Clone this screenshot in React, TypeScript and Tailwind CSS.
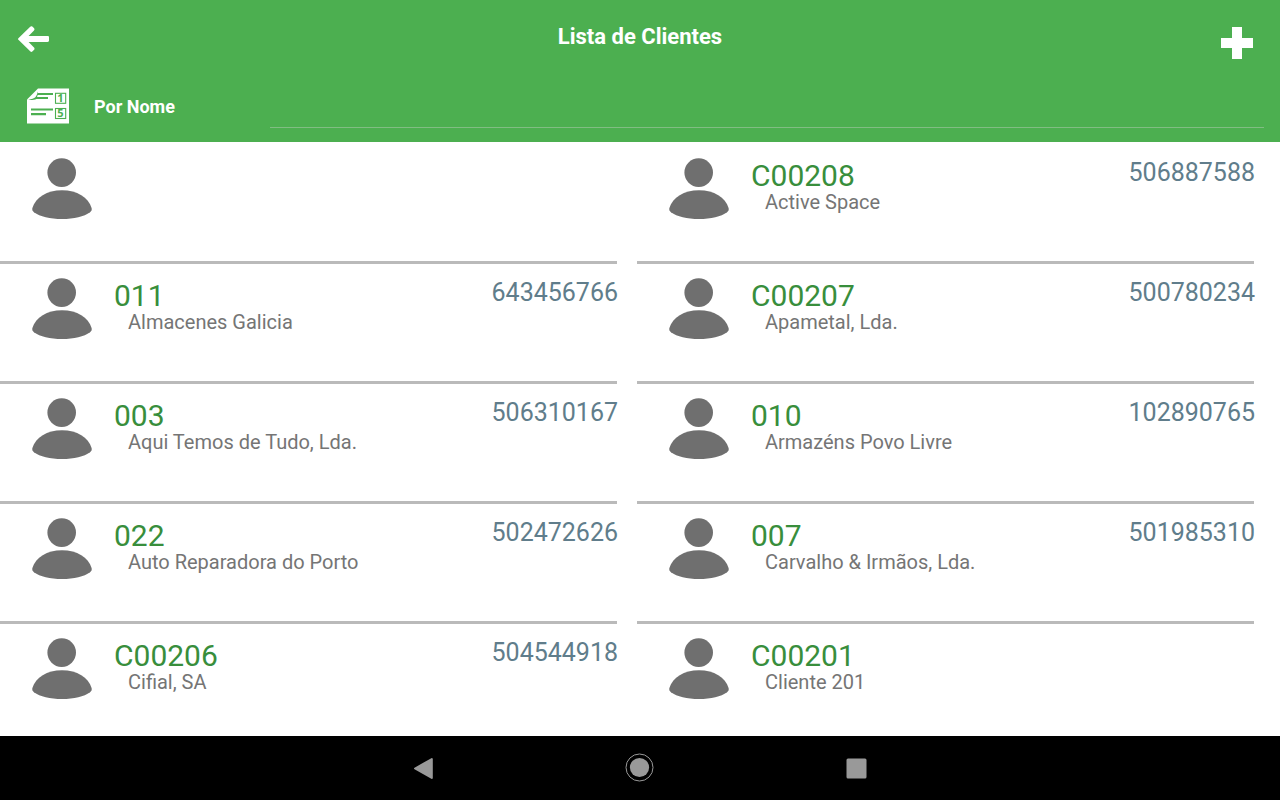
import React from "react";

type Client = { code: string; name: string; taxId: string };

const clients: Client[] = [
  { code: "", name: "", taxId: "" },
  { code: "C00208", name: "Active Space", taxId: "506887588" },
  { code: "011", name: "Almacenes Galicia", taxId: "643456766" },
  { code: "C00207", name: "Apametal, Lda.", taxId: "500780234" },
  { code: "003", name: "Aqui Temos de Tudo, Lda.", taxId: "506310167" },
  { code: "010", name: "Armazéns Povo Livre", taxId: "102890765" },
  { code: "022", name: "Auto Reparadora do Porto", taxId: "502472626" },
  { code: "007", name: "Carvalho & Irmãos, Lda.", taxId: "501985310" },
  { code: "C00206", name: "Cifial, SA", taxId: "504544918" },
  { code: "C00201", name: "Cliente 201", taxId: "" },
];

function BackIcon() {
  return (
    <svg width="32" height="26" viewBox="0 0 32 26" aria-hidden="true">
      <path
        d="M0.4 12.2 12.2 0.7c.7-.7 1.4-.7 2.1-.2l1.6 1.5c.8.8.8 1.7.1 2.5L10.600 10H29.500c1 0 1.500.500 1.500 1.400v3.200c0 .9-.5 1.400-1.500 1.400H10.600l5.400 5.500c.7.8.7 1.700-.1 2.500l-1.600 1.500c-.7.6-1.400.5-2.100-.2L.4 13.800c-.5-.5-.5-1.100 0-1.600Z"
        fill="#fff"
      />
    </svg>
  );
}

function PlusIcon() {
  return (
    <svg width="32" height="32" viewBox="0 0 32 32" aria-hidden="true">
      <path d="M11 0h10v11h11v10H21v11H11V21H0V11h11Z" fill="#fff" />
    </svg>
  );
}

function SortIcon() {
  return (
    <svg width="42" height="38" viewBox="0 0 42 38" aria-hidden="true">
      <path d="M11 .5H42V35.500H0V11.500Z" fill="#fff" />
      <g fill="#4caf50">
        <path d="M11 3.500V5H26V7H10.700L10 9H21V11H9.500C7.500 12 4 12.200 1.200 11.900 4.500 11.300 7.300 10.600 8.300 9.300 9.800 7.500 10.200 5.500 11 3.500Z" />
        <path d="M4 20.500H26V22.500H4ZM4 25H19V27.200H4Z" />
      </g>
      <g fill="none" stroke="#4caf50" strokeWidth="1.100">
        <rect x="28.500" y="5.300" width="10.200" height="10" />
        <rect x="28.500" y="20.500" width="10.200" height="10" />
      </g>
      <g
        fill="#4caf50"
        fontFamily="'Open Sans', sans-serif"
        fontSize="11"
        fontWeight="700"
        textAnchor="middle"
      >
        <text x="33.500" y="14.200">1</text>
        <text x="33.500" y="29.400">5</text>
      </g>
    </svg>
  );
}

function PersonIcon() {
  return (
    <svg className="shrink-0" width="60" height="62" viewBox="0 0 60 62" aria-hidden="true">
      <g fill="#6f6f6f">
        <circle cx="29.700" cy="14.600" r="14.300" />
        <path d="M30 32.200C45 32.200 56.500 39.500 59.600 50C60 52 59.600 53 58 54.200C52 58.500 42 61 30 61C18 61 8 58.500 2 54.200C.4 53 0 52 .4 50C3.500 39.500 15 32.200 30 32.200Z" />
      </g>
    </svg>
  );
}

function ClientRow({ code, name, taxId }: Client) {
  return (
    <li className="flex h-[120px] items-start border-b-3 border-[#bababa] pt-3.5 pl-8">
      <PersonIcon />
      <div className="min-w-0 flex-1 pt-0.5 pl-[22px]">
        <p className="text-[30px] leading-8 text-[#388e3c]">{code}</p>
        <p className="pl-3.5 text-xl leading-5 text-[#757575]">{name}</p>
      </div>
      <p className="-mr-px text-[25px] leading-[30px] text-[#607d8b]">{taxId}</p>
    </li>
  );
}

export default function App() {
  return (
    <div className="flex h-screen flex-col bg-white font-['Roboto',sans-serif]">
      <header className="shrink-0 bg-[#4caf50] text-white">
        <div className="grid h-[72px] grid-cols-[1fr_auto_1fr] items-start">
          <button type="button" aria-label="Voltar" className="justify-self-start pt-[26px] pl-[18px]">
            <BackIcon />
          </button>
          <h1 className="pt-6 text-[22px] leading-[26px] font-bold">Lista de Clientes</h1>
          <button type="button" aria-label="Adicionar cliente" className="justify-self-end pt-[27px] pr-[27px]">
            <PlusIcon />
          </button>
        </div>
        <div className="flex h-[70px] items-center pr-4 pl-[27px]">
          <button type="button" aria-label="Ordenar" className="shrink-0">
            <SortIcon />
          </button>
          <label htmlFor="search" className="w-[201px] shrink-0 pl-[25px] text-lg leading-5 font-bold">
            Por Nome
          </label>
          <input
            id="search"
            type="text"
            className="h-[42px] min-w-0 flex-1 border-b border-[#81bd83] bg-transparent text-lg outline-none"
          />
        </div>
      </header>
      <main className="min-h-0 flex-1 overflow-y-auto pt-0.5 pr-[26px] [scrollbar-width:none]">
        <ul className="grid grid-cols-2 gap-x-5">
          {clients.map((client, index) => (
            <ClientRow key={index} {...client} />
          ))}
        </ul>
      </main>
      <nav className="flex h-16 shrink-0 items-center justify-center gap-[168px] bg-black">
        <button type="button" aria-label="Retroceder" className="flex size-12 items-center justify-center">
          <svg width="20" height="22" viewBox="0 0 20 22" aria-hidden="true">
            <path d="M1 11.500 17.800 2V21Z" fill="#999" stroke="#999" strokeWidth="2" strokeLinejoin="round" />
          </svg>
        </button>
        <button type="button" aria-label="Início" className="flex size-12 items-center justify-center">
          <svg width="30" height="30" viewBox="0 0 30 30" aria-hidden="true">
            <circle cx="14.500" cy="14.500" r="13.500" fill="none" stroke="#999" />
            <circle cx="14.500" cy="14.500" r="9.600" fill="#999" />
          </svg>
        </button>
        <button type="button" aria-label="Aplicações recentes" className="flex size-12 items-center justify-center">
          <svg width="21" height="21" viewBox="0 0 21 21" aria-hidden="true">
            <rect x=".5" y=".5" width="20" height="20" rx="1.500" fill="#999" />
          </svg>
        </button>
      </nav>
    </div>
  );
}
